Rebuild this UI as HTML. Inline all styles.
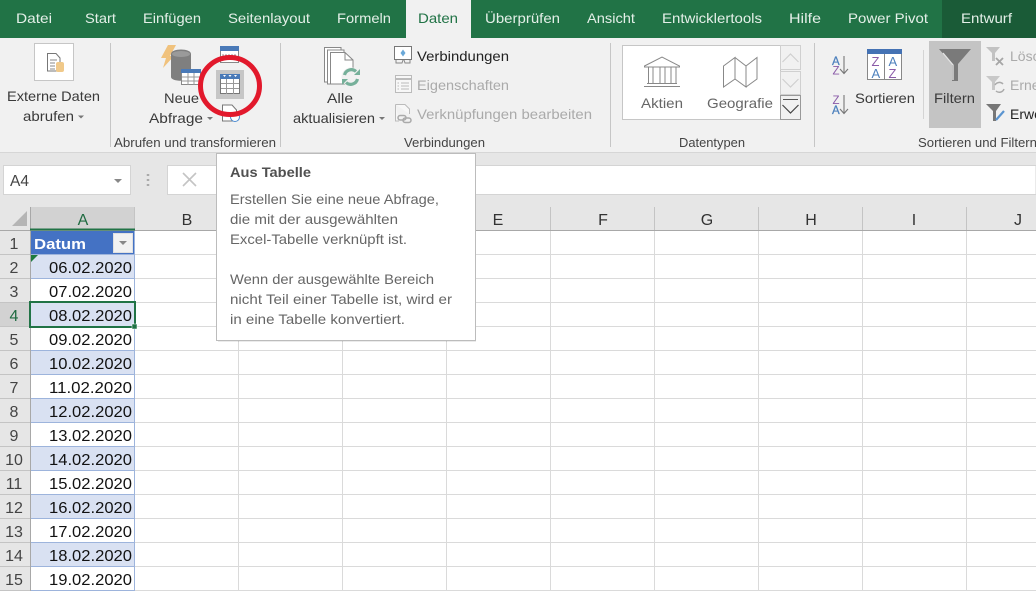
<!DOCTYPE html>
<html lang="de"><head><meta charset="utf-8"><title>Excel</title>
<style>
html,body{margin:0;padding:0;width:1036px;height:591px;overflow:hidden;background:#fff}
svg{display:block}
text{font-family:"Liberation Sans",sans-serif;font-size:14px;fill:#3a3a3a}
.d{fill:#111;font-size:16px}
.rn{font-size:16px;fill:#444;text-anchor:middle}
.cl{font-size:16px;fill:#333;text-anchor:middle}
.g{font-size:12.5px;fill:#444}
.dis{fill:#aaa}
.tip{fill:#666;font-size:14px}
.t{fill:#e4efe8;font-size:14px}
</style></head><body>
<svg width="1036" height="591" viewBox="0 0 1036 591" xmlns="http://www.w3.org/2000/svg" shape-rendering="geometricPrecision">
<rect width="1036" height="591" fill="#fff"/>
<!-- title tabs -->
<rect width="1036" height="38" fill="#217346"/>
<rect x="942" width="94" height="38" fill="#1a5b37"/>
<rect x="406" width="65" height="38" fill="#f1f1f1"/>
<text class="t" x="16" y="23" textLength="36" lengthAdjust="spacingAndGlyphs">Datei</text>
<text class="t" x="85" y="23" textLength="31" lengthAdjust="spacingAndGlyphs">Start</text>
<text class="t" x="143" y="23" textLength="58" lengthAdjust="spacingAndGlyphs">Einfügen</text>
<text class="t" x="228" y="23" textLength="82" lengthAdjust="spacingAndGlyphs">Seitenlayout</text>
<text class="t" x="337" y="23" textLength="54" lengthAdjust="spacingAndGlyphs">Formeln</text>
<text x="418" y="23" textLength="40" lengthAdjust="spacingAndGlyphs" style="fill:#217346">Daten</text>
<text class="t" x="485" y="23" textLength="75" lengthAdjust="spacingAndGlyphs">Überprüfen</text>
<text class="t" x="587" y="23" textLength="48" lengthAdjust="spacingAndGlyphs">Ansicht</text>
<text class="t" x="662" y="23" textLength="100" lengthAdjust="spacingAndGlyphs">Entwicklertools</text>
<text class="t" x="789" y="23" textLength="32" lengthAdjust="spacingAndGlyphs">Hilfe</text>
<text class="t" x="848" y="23" textLength="80" lengthAdjust="spacingAndGlyphs">Power Pivot</text>
<text class="t" x="961" y="23" textLength="51" lengthAdjust="spacingAndGlyphs">Entwurf</text>
<!-- ribbon -->
<rect y="38" width="1036" height="114" fill="#f1f1f1"/>
<rect y="152" width="1036" height="55" fill="#e6e6e6"/>
<rect y="152" width="1036" height="1" fill="#d6d6d6"/>
<g stroke="#c6c6c6" stroke-width="1">
<path d="M110.500 43V147M280.500 43V147M610.500 43V147M814.500 43V147"/>
<path d="M923.500 50V119" stroke="#d4d4d4"/>
</g>
<!-- Externe Daten -->
<rect x="34.500" y="43.500" width="39" height="37" fill="#fff" stroke="#c6c6c6"/>
<path d="M47.500 53.500H56L60 58V71H47.500Z" fill="#fff" stroke="#777"/>
<path d="M50 60H57M50 63H55M50 66H55M50 69H55" stroke="#888"/>
<rect x="56" y="62" width="8" height="10" rx="2" fill="#f0c98a"/>
<text x="7" y="101" textLength="93" lengthAdjust="spacingAndGlyphs">Externe Daten</text>
<text x="23" y="121" textLength="51" lengthAdjust="spacingAndGlyphs">abrufen</text>
<path d="M78 115.500H84L81 118.500Z" fill="#777"/>
<!-- Neue Abfrage -->
<path d="M168 45H176L170 56H174L163 68L166 58H161Z" fill="#f0c27d"/>
<path d="M171 54C171 48 191 48 191 54V77C191 82 171 82 171 77Z" fill="#7f7f7f"/>
<ellipse cx="181" cy="54" rx="9" ry="3" fill="#9a9a9a"/>
<rect x="181.500" y="69.500" width="19" height="15" fill="#fff" stroke="#888"/>
<rect x="181" y="69" width="20" height="4" fill="#4a7ab8"/>
<path d="M188 73V85M194 73V85M182 77H200M182 81H200" stroke="#999"/>
<rect x="220.500" y="46.500" width="18" height="16" fill="#fff" stroke="#888"/>
<rect x="220" y="46" width="19" height="5" fill="#4a7ab8"/>
<path d="M222 55H237" stroke="#999" stroke-dasharray="2 1"/>
<rect x="216" y="70" width="28" height="29" fill="#c6c6c6"/>
<rect x="220.500" y="74.500" width="19" height="19" fill="#fff" stroke="#777"/>
<rect x="220" y="74" width="20" height="5" fill="#4a7ab8"/>
<path d="M223 75H226L224.500 77ZM228.500 75H231.500L230 77ZM234 75H237L235.500 77Z" fill="#fff"/>
<path d="M226.500 79V94M233.500 79V94M221 83.500H239M221 88.500H239" stroke="#999"/>
<path d="M222.500 105H232L236.500 110V121H222.500Z" fill="#fff" stroke="#777"/>
<circle cx="235" cy="117" r="4.500" fill="#fff" stroke="#4a8ad0"/>
<text x="164" y="103" textLength="35" lengthAdjust="spacingAndGlyphs">Neue</text>
<text x="149" y="123" textLength="54" lengthAdjust="spacingAndGlyphs">Abfrage</text>
<path d="M207 117H213L210 120Z" fill="#777"/>
<ellipse cx="230" cy="86" rx="29.500" ry="28.500" fill="none" stroke="#e2192c" stroke-width="5"/>
<text class="g" x="114" y="147" textLength="162" lengthAdjust="spacingAndGlyphs">Abrufen und transformieren</text>
<!-- Alle aktualisieren -->
<path d="M324.500 47.500H341V82H324.500Z" fill="#fff" stroke="#888"/>
<path d="M327.500 50H344V84H327.500Z" fill="#fff" stroke="#888"/>
<path d="M330.500 52.500H345L353 60V84H330.500Z" fill="#fff" stroke="#888"/>
<path d="M345 52.500V60H353" fill="none" stroke="#888"/>
<circle cx="351" cy="77" r="9.500" fill="#f1f1f1"/>
<path d="M344.500 75A7 7 0 0 1 356 71.500M357.500 79A7 7 0 0 1 346 82.500" fill="none" stroke="#76b09a" stroke-width="3.200"/>
<path d="M354 75H360V69ZM348 79H342V85Z" fill="#76b09a"/>
<text x="327" y="103" textLength="26" lengthAdjust="spacingAndGlyphs">Alle</text>
<text x="293" y="123" textLength="82" lengthAdjust="spacingAndGlyphs">aktualisieren</text>
<path d="M379 117H385L382 120Z" fill="#777"/>
<rect x="394.500" y="46.500" width="17" height="13" fill="#fff" stroke="#777"/>
<path d="M403 49.500L405.500 53L403 56.500L400.500 53Z" fill="#6aa8d8"/>
<path d="M396 60V63H402L403 60M404 60L405 63H410V60" fill="none" stroke="#888"/>
<text x="417" y="61" textLength="92" lengthAdjust="spacingAndGlyphs" style="fill:#222">Verbindungen</text>
<rect x="395.500" y="75.500" width="16" height="17" fill="#f7f7f7" stroke="#bbb"/>
<path d="M396 79H411" stroke="#bbb" stroke-width="2"/>
<path d="M401 83H409M401 86H409M401 89H409M397.500 83H399M397.500 86H399M397.500 89H399" stroke="#bbb"/>
<text class="dis" x="417" y="90" textLength="92" lengthAdjust="spacingAndGlyphs">Eigenschaften</text>
<path d="M395.500 104.500H405L409.500 109V114M395.500 104.500V121H399" fill="#f7f7f7" stroke="#bbb"/>
<rect x="398" y="115.500" width="8" height="4.500" rx="2.200" fill="none" stroke="#aaa" stroke-width="1.500"/>
<rect x="403" y="118" width="8" height="4.500" rx="2.200" fill="none" stroke="#aaa" stroke-width="1.500"/>
<text class="dis" x="417" y="119" textLength="175" lengthAdjust="spacingAndGlyphs">Verknüpfungen bearbeiten</text>
<text class="g" x="404" y="147" textLength="81" lengthAdjust="spacingAndGlyphs">Verbindungen</text>
<!-- Datentypen -->
<rect x="622.500" y="45.500" width="158" height="74" fill="#fff" stroke="#c6c6c6"/>
<rect x="780.500" y="45.500" width="20" height="24" fill="#f1f1f1" stroke="#d0d0d0"/>
<rect x="780.500" y="71.500" width="20" height="23" fill="#f1f1f1" stroke="#d0d0d0"/>
<rect x="780.500" y="95.500" width="20" height="24" fill="#f1f1f1" stroke="#999"/>
<path d="M782.500 62L790.500 54L798.500 62M782.500 79L790.500 87L798.500 79" fill="none" stroke="#d0d0d0" stroke-width="1.200"/>
<path d="M783 99.500H798" stroke="#555"/>
<path d="M782.500 105L790.500 113L798.500 105" fill="none" stroke="#444" stroke-width="1.200"/>
<g fill="none" stroke="#888" stroke-width="1">
<path d="M644.500 66L662 57L679.500 66V67H644.500Z"/>
<path d="M648.500 67V83M653 67V83M660 67V83M665 67V83M671 67V83M676 67V83"/>
<path d="M647 83.500H677M644 86.500H680"/>
<path d="M723.500 66L735 57.500V79L723.500 87ZM735 57.500L746 66V87L735 79M746 66L757 57.500V79L746 87"/>
</g>
<text x="641" y="108" textLength="42" lengthAdjust="spacingAndGlyphs" style="fill:#666">Aktien</text>
<text x="707" y="108" textLength="66" lengthAdjust="spacingAndGlyphs" style="fill:#666">Geografie</text>
<text class="g" x="679" y="147" textLength="66" lengthAdjust="spacingAndGlyphs">Datentypen</text>
<!-- Sort -->
<text x="832" y="65" style="font-size:11.500px;fill:#4e81bd;stroke:#4e81bd;stroke-width:.3px">A</text>
<text x="832.500" y="74.500" style="font-size:11.500px;fill:#8a5ba8">Z</text>
<path d="M844 56V73M840 69L844 73.500L848 69" fill="none" stroke="#777" stroke-width="1.100"/>
<text x="832.500" y="104" style="font-size:11.500px;fill:#8a5ba8">Z</text>
<text x="832" y="114" style="font-size:11.500px;fill:#4e81bd;stroke:#4e81bd;stroke-width:.3px">A</text>
<path d="M844 95V113M840 109L844 113.500L848 109" fill="none" stroke="#777" stroke-width="1.100"/>
<rect x="867.500" y="49.500" width="34" height="30" fill="#fff" stroke="#888"/>
<rect x="867" y="49" width="35" height="5" fill="#4472b4"/>
<path d="M884.500 54V80" stroke="#888"/>
<text x="871.500" y="66" style="font-size:13px;fill:#8a5ba8">Z</text>
<text x="871.500" y="78" style="font-size:13px;fill:#4e81bd">A</text>
<text x="888.500" y="66" style="font-size:13px;fill:#4e81bd">A</text>
<text x="888.500" y="78" style="font-size:13px;fill:#8a5ba8">Z</text>
<text x="855" y="103" textLength="60" lengthAdjust="spacingAndGlyphs">Sortieren</text>
<!-- Filter -->
<rect x="929" y="41" width="52" height="87" fill="#c4c4c4"/>
<path d="M939 49H971L958 64V81H952V64Z" fill="#7a7a7a"/>
<path d="M943 53L953 65V80" fill="none" stroke="#e4e4e4" stroke-width="1.300"/>
<text x="934" y="103" textLength="41" lengthAdjust="spacingAndGlyphs">Filtern</text>
<path d="M986 47H1000L995 53V61H992V53Z" fill="#c2c2c2"/>
<path d="M996 58L1003 65M1003 58L996 65" stroke="#a6a6a6" stroke-width="1.800"/>
<path d="M986 76H1000L995 82V90H992V82Z" fill="#c8c8c8"/>
<path d="M995 85A5 5 0 0 1 1003 84M1004 89A5 5 0 0 1 996 91" fill="none" stroke="#aaa" stroke-width="1.500"/>
<path d="M986 104H1001L996 111V121H993V111Z" fill="#777"/>
<path d="M996 120L1004 111" stroke="#5a94d0" stroke-width="2.200"/>
<text class="dis" x="1010" y="61">Löschen</text>
<text class="dis" x="1010" y="90">Erneut</text>
<text x="1010" y="119" style="fill:#222">Erweitert</text>
<text class="g" x="918" y="147" textLength="119" lengthAdjust="spacingAndGlyphs">Sortieren und Filtern</text>
<!-- formula bar -->
<rect x="3.500" y="165.500" width="127" height="29" fill="#fff" stroke="#d4d4d4"/>
<text x="10" y="186" style="font-size:15.500px;fill:#444">A4</text>
<path d="M114 179H122L118 183Z" fill="#888"/>
<path d="M148 174V176M148 179V181M148 184V186" stroke="#aaa" stroke-width="2.500"/>
<rect x="167.500" y="165.500" width="868.500" height="29" fill="#fff" stroke="#d4d4d4"/>
<path d="M183 173L196 186M196 173L183 186" stroke="#c4c4c4" stroke-width="1.600"/>
<!-- grid headers -->
<rect y="207" width="1036" height="23" fill="#e6e6e6"/>
<rect y="230" width="30" height="361" fill="#e6e6e6"/>
<rect x="30" y="207" width="105" height="23" fill="#d2d2d2"/>
<rect y="302" width="30" height="24" fill="#d2d2d2"/>
<path d="M12 226L27 211V226Z" fill="#b5b5b5"/>
<path d="M30.500 207V591" stroke="#a8a8a8"/>
<path d="M0 230.500H1036" stroke="#a8a8a8"/>
<path d="M238.500 207V230M342.500 207V230M446.500 207V230M550.500 207V230M654.500 207V230M758.500 207V230M862.500 207V230M966.500 207V230M134.500 207V230" stroke="#c4c4c4"/>
<path d="M238.500 231V591M342.500 231V591M446.500 231V591M550.500 231V591M654.500 231V591M758.500 231V591M862.500 231V591M966.500 231V591" stroke="#dadada"/>
<path d="M135 254.500H1036M135 278.500H1036M135 302.500H1036M135 326.500H1036M135 350.500H1036M135 374.500H1036M135 398.500H1036M135 422.500H1036M135 446.500H1036M135 470.500H1036M135 494.500H1036M135 518.500H1036M135 542.500H1036M135 566.500H1036M135 590.500H1036" stroke="#dadada"/>
<path d="M0 254.500H30M0 278.500H30M0 302.500H30M0 326.500H30M0 350.500H30M0 374.500H30M0 398.500H30M0 422.500H30M0 446.500H30M0 470.500H30M0 494.500H30M0 518.500H30M0 542.500H30M0 566.500H30M0 590.500H30" stroke="#c4c4c4"/>
<text class="cl" x="83" y="225" style="fill:#1f6b41">A</text>
<text class="cl" x="187" y="225">B</text>
<text class="cl" x="498" y="225">E</text>
<text class="cl" x="603" y="225">F</text>
<text class="cl" x="707" y="225">G</text>
<text class="cl" x="811" y="225">H</text>
<text class="cl" x="914" y="225">I</text>
<text class="cl" x="1018" y="225">J</text>
<!-- table -->
<rect x="31" y="231" width="104" height="24" fill="#4472c4"/>
<rect x="31" y="255" width="104" height="24" fill="#d9e1f2"/>
<rect x="31" y="303" width="104" height="24" fill="#d9e1f2"/>
<rect x="31" y="351" width="104" height="24" fill="#d9e1f2"/>
<rect x="31" y="399" width="104" height="24" fill="#d9e1f2"/>
<rect x="31" y="447" width="104" height="24" fill="#d9e1f2"/>
<rect x="31" y="495" width="104" height="24" fill="#d9e1f2"/>
<rect x="31" y="543" width="104" height="24" fill="#d9e1f2"/>
<path d="M31 254.500H135M31 278.500H135M31 302.500H135M31 326.500H135M31 350.500H135M31 374.500H135M31 398.500H135M31 422.500H135M31 446.500H135M31 470.500H135M31 494.500H135M31 518.500H135M31 542.500H135M31 566.500H135M31 590.500H135M134.500 231V591" stroke="#9db4dc"/>
<text x="34" y="249" textLength="52" lengthAdjust="spacingAndGlyphs" style="font-size:15px;font-weight:bold;fill:#fff">Datum</text>
<rect x="113.500" y="233.500" width="19" height="19" fill="#f2f2f2" stroke="#e0e0e0"/>
<path d="M119 241H127L123 245Z" fill="#888"/>
<path d="M31 255H38L31 262Z" fill="#1d7a3e"/>
<text class="rn" x="14" y="249">1</text>
<text class="rn" x="14" y="273">2</text><text class="d" x="49" y="273" textLength="83" lengthAdjust="spacingAndGlyphs">06.02.2020</text>
<text class="rn" x="14" y="297">3</text><text class="d" x="49" y="297" textLength="83" lengthAdjust="spacingAndGlyphs">07.02.2020</text>
<text class="rn" x="14" y="321" style="fill:#1f6b41">4</text><text class="d" x="49" y="321" textLength="83" lengthAdjust="spacingAndGlyphs">08.02.2020</text>
<text class="rn" x="14" y="345">5</text><text class="d" x="49" y="345" textLength="83" lengthAdjust="spacingAndGlyphs">09.02.2020</text>
<text class="rn" x="14" y="369">6</text><text class="d" x="49" y="369" textLength="83" lengthAdjust="spacingAndGlyphs">10.02.2020</text>
<text class="rn" x="14" y="393">7</text><text class="d" x="49" y="393" textLength="83" lengthAdjust="spacingAndGlyphs">11.02.2020</text>
<text class="rn" x="14" y="417">8</text><text class="d" x="49" y="417" textLength="83" lengthAdjust="spacingAndGlyphs">12.02.2020</text>
<text class="rn" x="14" y="441">9</text><text class="d" x="49" y="441" textLength="83" lengthAdjust="spacingAndGlyphs">13.02.2020</text>
<text class="rn" x="14" y="465">10</text><text class="d" x="49" y="465" textLength="83" lengthAdjust="spacingAndGlyphs">14.02.2020</text>
<text class="rn" x="14" y="489">11</text><text class="d" x="49" y="489" textLength="83" lengthAdjust="spacingAndGlyphs">15.02.2020</text>
<text class="rn" x="14" y="513">12</text><text class="d" x="49" y="513" textLength="83" lengthAdjust="spacingAndGlyphs">16.02.2020</text>
<text class="rn" x="14" y="537">13</text><text class="d" x="49" y="537" textLength="83" lengthAdjust="spacingAndGlyphs">17.02.2020</text>
<text class="rn" x="14" y="561">14</text><text class="d" x="49" y="561" textLength="83" lengthAdjust="spacingAndGlyphs">18.02.2020</text>
<text class="rn" x="14" y="585">15</text><text class="d" x="49" y="585" textLength="83" lengthAdjust="spacingAndGlyphs">19.02.2020</text>
<!-- selection -->
<path d="M30 229.500H135" stroke="#217346" stroke-width="2"/>
<rect x="30" y="302" width="105" height="25" fill="none" stroke="#217346" stroke-width="2"/>
<rect x="132" y="324" width="5" height="5" fill="#217346" stroke="#fff" stroke-width=".5"/>
<!-- tooltip -->
<rect x="218" y="156" width="258" height="186" fill="#000" opacity=".08"/>
<rect x="216.500" y="153.500" width="259" height="187" fill="#fff" stroke="#bcbcbc"/>
<text x="230" y="177" textLength="81" lengthAdjust="spacingAndGlyphs" style="font-weight:bold;fill:#505050">Aus Tabelle</text>
<text class="tip" x="230" y="204" textLength="209" lengthAdjust="spacingAndGlyphs">Erstellen Sie eine neue Abfrage,</text>
<text class="tip" x="230" y="224" textLength="168" lengthAdjust="spacingAndGlyphs">die mit der ausgewählten</text>
<text class="tip" x="230" y="244" textLength="177" lengthAdjust="spacingAndGlyphs">Excel-Tabelle verknüpft ist.</text>
<text class="tip" x="230" y="284" textLength="204" lengthAdjust="spacingAndGlyphs">Wenn der ausgewählte Bereich</text>
<text class="tip" x="230" y="304" textLength="222" lengthAdjust="spacingAndGlyphs">nicht Teil einer Tabelle ist, wird er</text>
<text class="tip" x="230" y="324" textLength="175" lengthAdjust="spacingAndGlyphs">in eine Tabelle konvertiert.</text>
</svg>
</body></html>
